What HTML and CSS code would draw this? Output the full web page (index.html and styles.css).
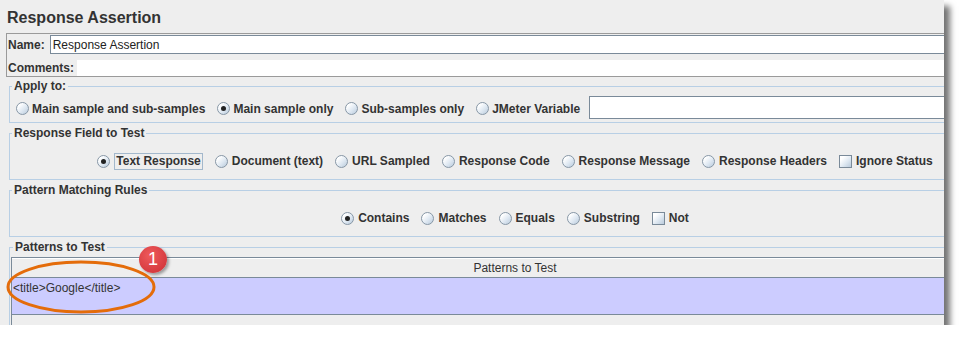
FILE: index.html
```html
<!DOCTYPE html>
<html lang="en">
<head>
  <meta charset="UTF-8">
  <title>Response Assertion</title>
  <link rel="stylesheet" href="styles.css">
</head>
<body>

<div class="frame">
  <div class="sheet">
    <h1 class="title">Response Assertion</h1>

    <div class="name-box">
      <div class="name-row">
        <span class="lbl">Name:</span>
        <div class="text-field">Response Assertion</div>
      </div>
      <div class="comments-row">
        <span class="lbl">Comments:</span>
        <div class="comments-field"></div>
      </div>
    </div>

    <fieldset class="group">
      <legend>Apply to:</legend>
      <div class="row row-left">
        <label class="opt"><span class="radio"></span>Main sample and sub-samples</label>
        <label class="opt"><span class="radio checked"></span>Main sample only</label>
        <label class="opt"><span class="radio"></span>Sub-samples only</label>
        <label class="opt"><span class="radio"></span>JMeter Variable</label>
        <div class="var-field"></div>
      </div>
    </fieldset>

    <fieldset class="group">
      <legend>Response Field to Test</legend>
      <div class="row row-center">
        <label class="opt"><span class="radio checked"></span><span class="focus">Text Response</span></label>
        <label class="opt"><span class="radio"></span>Document (text)</label>
        <label class="opt"><span class="radio"></span>URL Sampled</label>
        <label class="opt"><span class="radio"></span>Response Code</label>
        <label class="opt"><span class="radio"></span>Response Message</label>
        <label class="opt"><span class="radio"></span>Response Headers</label>
        <label class="opt"><span class="check"></span>Ignore Status</label>
      </div>
    </fieldset>

    <fieldset class="group">
      <legend>Pattern Matching Rules</legend>
      <div class="row row-center">
        <label class="opt"><span class="radio checked"></span>Contains</label>
        <label class="opt"><span class="radio"></span>Matches</label>
        <label class="opt"><span class="radio"></span>Equals</label>
        <label class="opt"><span class="radio"></span>Substring</label>
        <label class="opt"><span class="check"></span>Not</label>
      </div>
    </fieldset>

    <fieldset class="group patterns">
      <legend>Patterns to Test</legend>
      <div class="table">
        <div class="table-head">Patterns to Test</div>
        <div class="table-row selected">&lt;title&gt;Google&lt;/title&gt;</div>
        <div class="table-rest"></div>
      </div>
    </fieldset>
  </div>

  <!-- annotations on top of the screenshot -->
  <svg class="ring" width="170" height="70" viewBox="0 0 170 70">
    <ellipse cx="81" cy="32" rx="73" ry="25" fill="none" stroke="#e46c0a" stroke-width="3"/>
  </svg>
  <div class="badge">1</div>
</div>

</body>
</html>
```

FILE: styles.css
```css
body {
    margin: 0;
    background: #fff;
    font-family: "Liberation Sans", Arial, sans-serif;
    color: #333;
}
.frame {
    position: relative;
    width: 944px;
    height: 325px;
    background: #eee;
    overflow: hidden;
    box-shadow: 6px 6px 6px rgba(0, 0, 0, 0.55);
}
.sheet {
    width: 1030px;
}
.title {
    margin: 0;
    padding: 8px 7px 0;
    font-size: 16px;
    line-height: 20px;
    font-weight: bold;
    color: #333;
}
.lbl {
    font-size: 12px;
    font-weight: bold;
    white-space: nowrap;
}
.name-box {
    margin: 5px 0 0 6px;
    border: 1px solid #9a9a9a;
    padding: 1px 0 0 1px;
}
.name-row {
    display: flex;
    align-items: center;
    height: 19px;
}
.text-field {
    flex: 1;
    height: 19px;
    box-sizing: border-box;
    margin-left: 5px;
    border: 1px solid #7a8a99;
    background: #fff;
    padding: 0 2px;
    font-size: 12px;
    line-height: 18px;
    color: #222;
}
.comments-row {
    display: flex;
    align-items: center;
    height: 16px;
    margin-top: 6px;
}
.comments-field {
    flex: 1;
    height: 16px;
    margin-left: 3px;
    background: #fff;
}
.group {
    margin: 3px 9px 0;
    border: 1px solid #b8cfe5;
    padding: 0;
    min-width: 0;
}
.group:first-of-type {
    margin-top: 2px;
}
.group legend {
    margin-left: 2px;
    padding: 0 2px;
    font-size: 12px;
    line-height: 14px;
    font-weight: bold;
}
.row {
    display: flex;
    align-items: center;
    gap: 12px;
    font-size: 12px;
    font-weight: bold;
}
.row-left {
    height: 23px;
    padding: 3px 0 3px 6px;
}
.row-left .opt {
    margin-top: 2px;
}
.row-center {
    height: 20px;
    padding: 11px 0 8px;
    justify-content: center;
}
.opt {
    display: flex;
    align-items: center;
    white-space: nowrap;
}
.radio {
    position: relative;
    width: 13px;
    height: 13px;
    margin-right: 4px;
    box-sizing: border-box;
    border: 1px solid #8797a6;
    border-radius: 50%;
    background: linear-gradient(135deg, #fff 20%, #dde7f1 60%, #b9cadb);
}
.row-left .radio {
    margin-right: 3px;
}
.radio.checked::after {
    content: "";
    position: absolute;
    left: 3px;
    top: 3px;
    width: 5px;
    height: 5px;
    border-radius: 50%;
    background: #222;
}
.check {
    width: 13px;
    height: 13px;
    margin-right: 4px;
    box-sizing: border-box;
    border: 1px solid #7a8a99;
    background: linear-gradient(135deg, #fff 20%, #dde7f1 60%, #b9cadb);
}
.focus {
    border: 1px solid #a3b8cc;
    padding: 0 1px;
    line-height: 15px;
}
.var-field {
    flex: 1;
    height: 23px;
    box-sizing: border-box;
    margin-left: -3px;
    border: 1px solid #7a8a99;
    background: #fff;
}
.patterns {
    padding: 3px 1px 0;
    height: 90px;
}
.table {
    border: 1px solid #7a8a99;
    font-size: 12px;
}
.table-head {
    height: 18px;
    border-top: 1px solid #fff;
    border-bottom: 1px solid #7a8a99;
    text-align: center;
    line-height: 18px;
}
.table-row {
    height: 33px;
    padding: 3px 1px 0;
    line-height: 14px;
    border-bottom: 1px solid #7a8a99;
}
.selected {
    background: #ccccff;
}
.table-rest {
    height: 30px;
}
.ring {
    position: absolute;
    left: 0;
    top: 255px;
}
.badge {
    position: absolute;
    left: 139px;
    top: 246px;
    width: 28px;
    height: 27px;
    border-radius: 50%;
    background: radial-gradient(circle at 40% 35%, #ef5a5c, #d63b3f 70%);
    box-shadow: 2px 2px 3px rgba(0, 0, 0, 0.35);
    color: #fff;
    font-size: 18px;
    line-height: 27px;
    text-align: center;
}
```
